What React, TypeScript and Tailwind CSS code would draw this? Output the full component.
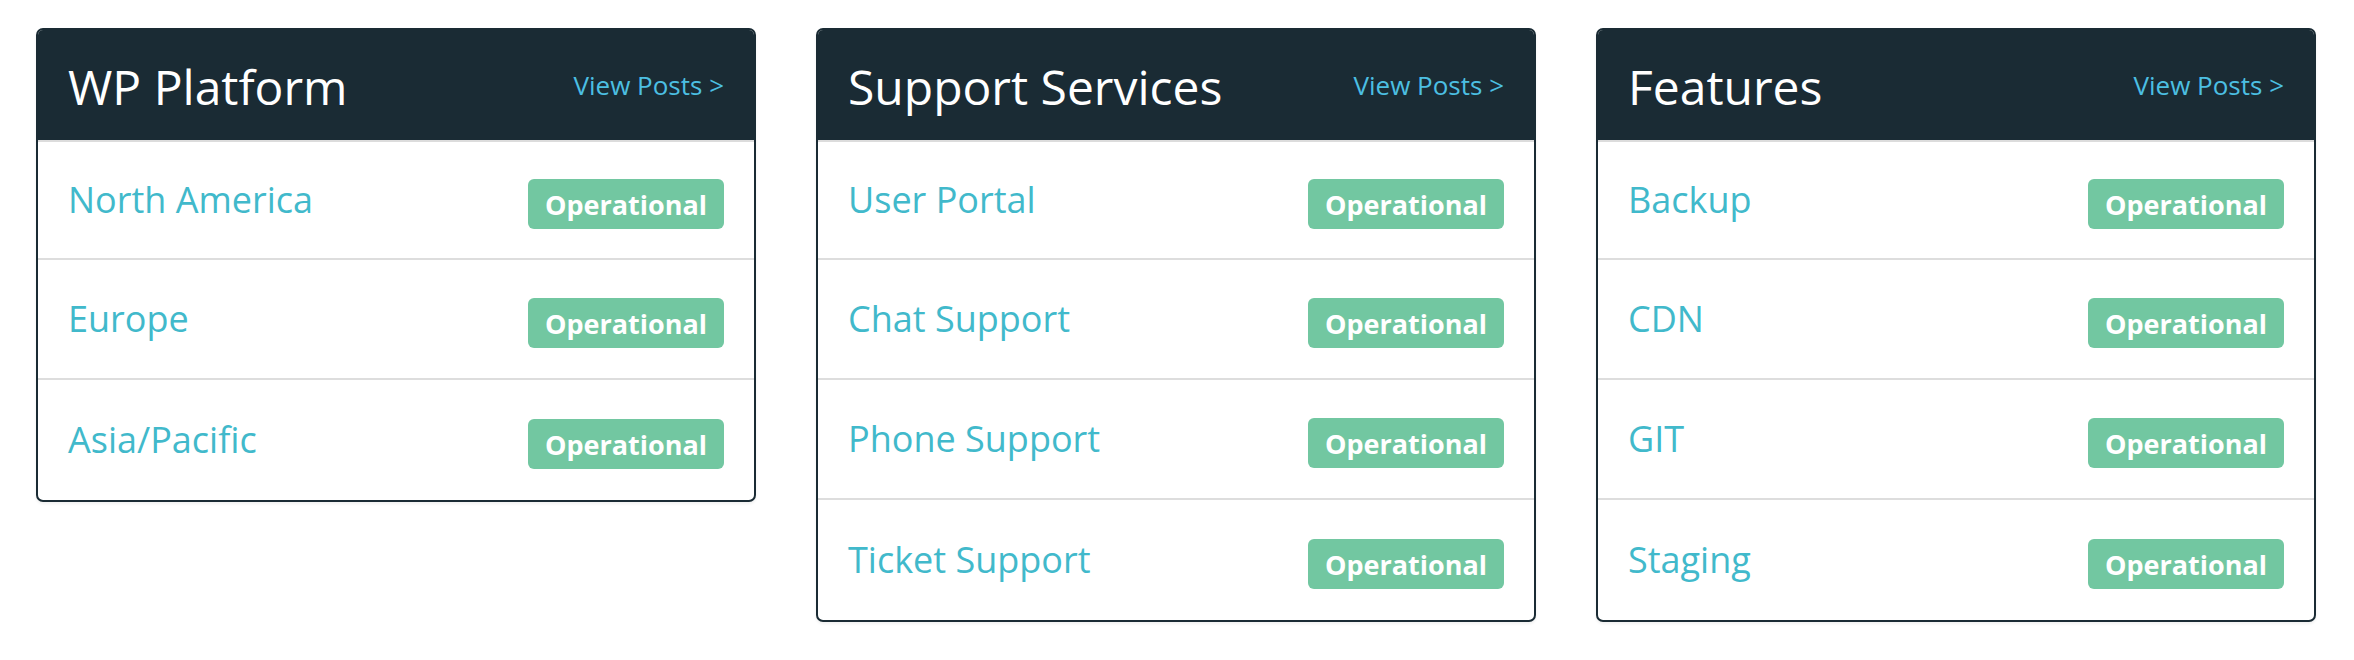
import { FC } from "react";

type Service = {
    name: string
    status: string
}

type PanelProps = {
    title: string
    services: Service[]
}

const panels: PanelProps[] = [
    {
        title: "WP Platform",
        services: [
            { name: "North America", status: "Operational" },
            { name: "Europe", status: "Operational" },
            { name: "Asia/Pacific", status: "Operational" },
        ],
    },
    {
        title: "Support Services",
        services: [
            { name: "User Portal", status: "Operational" },
            { name: "Chat Support", status: "Operational" },
            { name: "Phone Support", status: "Operational" },
            { name: "Ticket Support", status: "Operational" },
        ],
    },
    {
        title: "Features",
        services: [
            { name: "Backup", status: "Operational" },
            { name: "CDN", status: "Operational" },
            { name: "GIT", status: "Operational" },
            { name: "Staging", status: "Operational" },
        ],
    },
]

const StatusPanel: FC<PanelProps> = (props: PanelProps) => {
    return (
        <div className="w-[720px] border-2 border-[#1a2b34] rounded-[7px] overflow-hidden bg-white shadow-[0_2px_3px_rgba(0,0,0,0.06)]">
            <div className="h-[112px] bg-[#1a2b34] border-b-2 border-[#dcdcdc] flex items-center justify-between px-[30px]">
                <h2 className="text-[48px] text-white leading-none pt-[3px]">{props.title}</h2>
                <a className="text-[26px] text-[#4cbfe2] leading-none">View Posts &gt;</a>
            </div>
            <div className="flex flex-col divide-y-2 divide-[#dddddd]">
                {props.services.map((service, index) => (
                    <div key={index} className="h-[120px] first:h-[118px] flex items-center justify-between px-[30px]">
                        <span className="text-[36px] text-[#41b9cb] leading-none">{service.name}</span>
                        <span className="mt-[8px] h-[50px] px-[17px] flex items-center rounded-[6px] bg-[#72c7a1] text-white font-bold text-[27px] leading-none">
                            {service.status}
                        </span>
                    </div>
                ))}
            </div>
        </div>
    )
}

export default function App() {
    return (
        <div className="min-h-[660px] bg-white pt-[28px] pl-[36px] flex items-start gap-[60px] font-['Open_Sans',sans-serif]">
            {panels.map((panel, index) => (
                <StatusPanel key={index} {...panel} />
            ))}
        </div>
    )
}
